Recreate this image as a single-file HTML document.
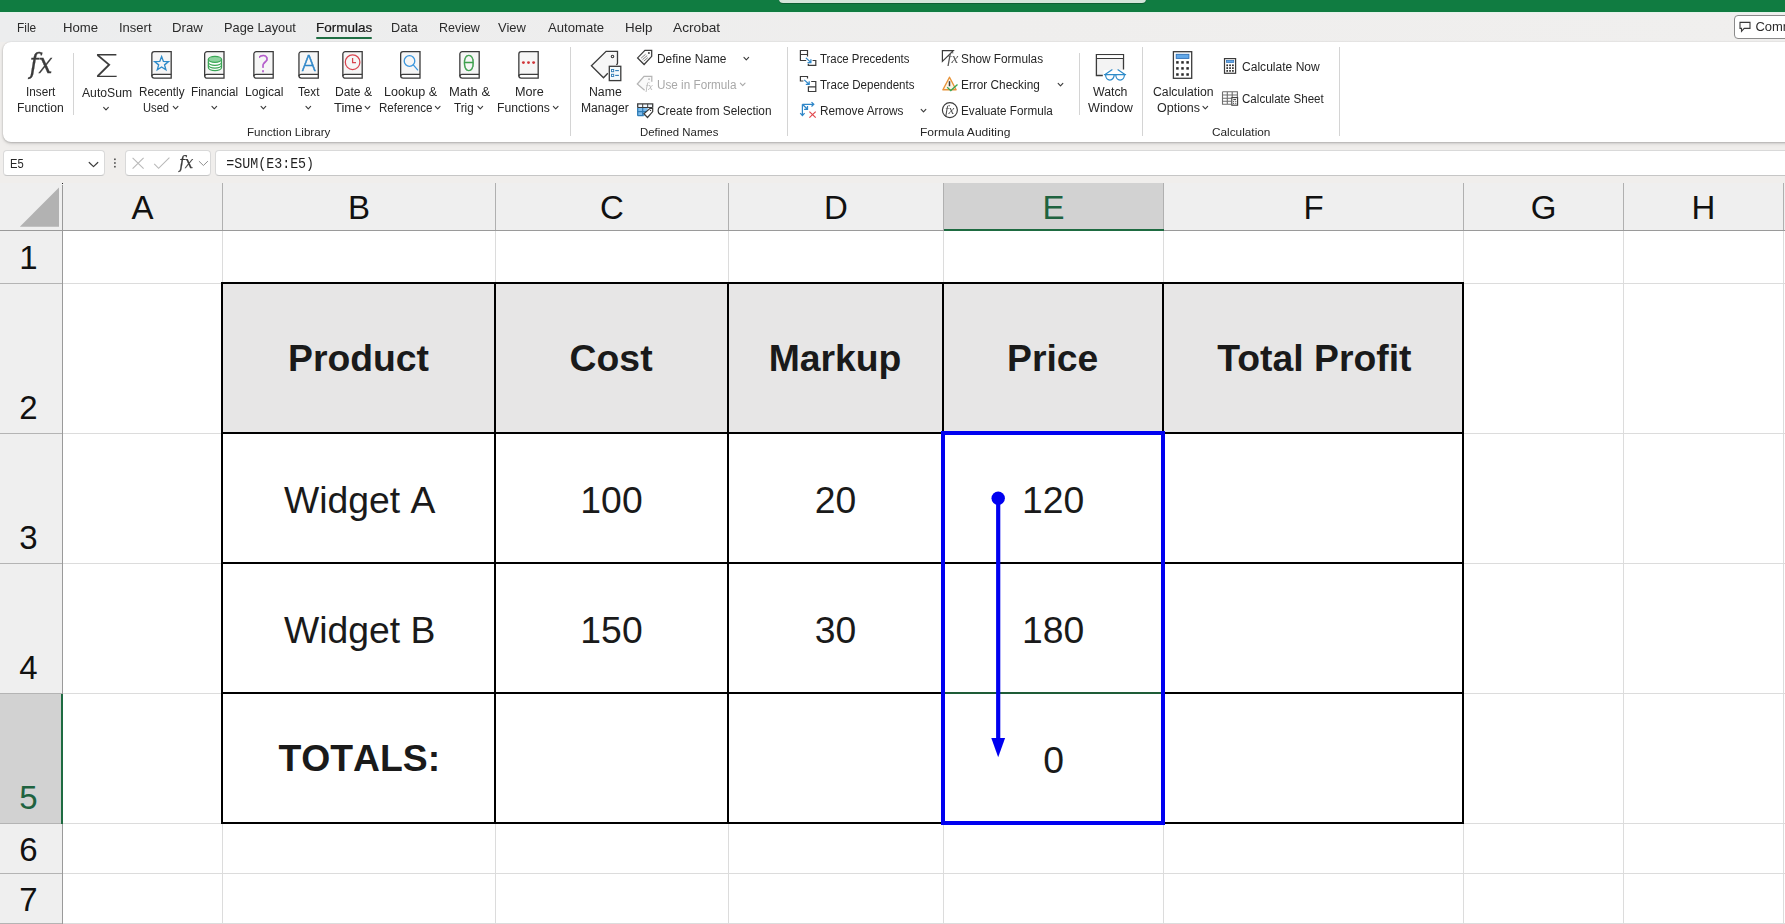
<!DOCTYPE html>
<html lang="en"><head><meta charset="utf-8"><title>Excel - Formulas</title>
<style>
html,body{margin:0;padding:0}
body{width:1785px;height:924px;overflow:hidden;position:relative;background:#f0eeec;font-family:"Liberation Sans",sans-serif}
.abs{position:absolute}
.t{position:absolute;white-space:nowrap;line-height:16px;transform-origin:0 0}
.hl{position:absolute;text-align:center;font-size:33px;line-height:48px;white-space:nowrap}
.ct{position:absolute;text-align:center;font-size:37.33px;color:#1a1a1a;white-space:nowrap;font-kerning:none}
.box{position:absolute;background:#fff;border:1px solid #d9d9d9;border-bottom-color:#c6c6c6;border-radius:4px;box-sizing:border-box}
</style></head><body>
<!-- title bar -->
<div class="abs" style="left:0;top:0;width:1785px;height:12px;background:#107c41"></div>
<div class="abs" style="left:779px;top:-6px;width:367px;height:9px;background:#d3e5da;border-radius:4px;box-shadow:0 1px 0 #0c5f32"></div>
<!-- tab row -->
<div class="abs" style="left:0;top:12px;width:1785px;height:30px;background:linear-gradient(90deg,#ecedee 0,#efeeed 55%,#f0efee 100%)"></div>
<div class="abs" style="left:316.3px;top:36.6px;width:56.2px;height:2.4px;background:#1f6e43;border-radius:1.2px"></div>
<div class="abs" style="left:0;top:12px;width:1785px;height:1px;background:#e4f2ea"></div>
<!-- comments button -->
<div class="abs" style="left:1733.7px;top:15px;width:70px;height:24px;background:#fff;border:1px solid #8a8a8a;border-radius:4px;box-sizing:border-box"></div>
<!-- ribbon -->
<div class="abs" style="left:3px;top:42px;width:1800px;height:100px;background:#fff;border-radius:8px;box-shadow:0 1px 2.5px rgba(0,0,0,.24),0 0 1.5px rgba(0,0,0,.10),0 3px 5px rgba(0,0,0,.04)"></div>
<!-- formula bar -->
<div class="box" style="left:3.4px;top:149.8px;width:101.2px;height:26.2px"></div>
<div class="box" style="left:124.7px;top:149.8px;width:85.9px;height:26.2px"></div>
<div class="box" style="left:214.7px;top:149.8px;width:1600px;height:26.2px"></div>
<div class="abs" style="left:0;top:0;width:1785px;height:180px;will-change:transform">
<span class="abs" style="left:226.3px;top:156.71px;font-family:'Liberation Mono',monospace;font-size:13.3px;line-height:16px;color:#1f1f1f;white-space:nowrap;transform-origin:0 50%;transform:scaleY(1.08)">=SUM(E3:E5)</span>
<span class="t" style="left:16.71px;top:19.50px;font-size:13px;color:#2b2b2b;font-weight:normal;transform:scaleX(0.9149);">File</span>
<span class="t" style="left:62.71px;top:19.50px;font-size:13px;color:#2b2b2b;font-weight:normal;transform:scaleX(1.0139);">Home</span>
<span class="t" style="left:118.72px;top:19.50px;font-size:13px;color:#2b2b2b;font-weight:normal;transform:scaleX(1.0017);">Insert</span>
<span class="t" style="left:171.72px;top:19.50px;font-size:13px;color:#2b2b2b;font-weight:normal;transform:scaleX(1.0173);">Draw</span>
<span class="t" style="left:223.72px;top:19.50px;font-size:13px;color:#2b2b2b;font-weight:normal;transform:scaleX(0.9843);">Page Layout</span>
<span class="t" style="left:391.12px;top:19.50px;font-size:13px;color:#2b2b2b;font-weight:normal;transform:scaleX(0.9746);">Data</span>
<span class="t" style="left:438.72px;top:19.50px;font-size:13px;color:#2b2b2b;font-weight:normal;transform:scaleX(0.9588);">Review</span>
<span class="t" style="left:498.42px;top:19.50px;font-size:13px;color:#2b2b2b;font-weight:normal;transform:scaleX(0.9970);">View</span>
<span class="t" style="left:547.71px;top:19.50px;font-size:13px;color:#2b2b2b;font-weight:normal;transform:scaleX(1.0092);">Automate</span>
<span class="t" style="left:625.41px;top:19.50px;font-size:13px;color:#2b2b2b;font-weight:normal;transform:scaleX(1.0269);">Help</span>
<span class="t" style="left:673.41px;top:19.50px;font-size:13px;color:#2b2b2b;font-weight:normal;transform:scaleX(1.0526);">Acrobat</span>
<span class="t" style="left:316.12px;top:19.50px;font-size:13px;color:#1a1a1a;font-weight:normal;transform:scaleX(1.0366);-webkit-text-stroke:0.22px #1a1a1a;">Formulas</span>
<span class="t" style="left:26.06px;top:83.84px;font-size:12px;color:#262626;font-weight:normal;transform:scaleX(0.9788);">Insert</span>
<span class="t" style="left:17.26px;top:99.84px;font-size:12px;color:#262626;font-weight:normal;transform:scaleX(1.0141);">Function</span>
<span class="t" style="left:81.76px;top:84.84px;font-size:12px;color:#262626;font-weight:normal;transform:scaleX(1.0146);">AutoSum</span>
<span class="t" style="left:138.76px;top:83.84px;font-size:12px;color:#262626;font-weight:normal;transform:scaleX(0.9741);">Recently</span>
<span class="t" style="left:142.76px;top:99.84px;font-size:12px;color:#262626;font-weight:normal;transform:scaleX(0.9309);">Used</span>
<span class="t" style="left:190.76px;top:83.84px;font-size:12px;color:#262626;font-weight:normal;transform:scaleX(0.9802);">Financial</span>
<span class="t" style="left:244.76px;top:83.84px;font-size:12px;color:#262626;font-weight:normal;transform:scaleX(1.0118);">Logical</span>
<span class="t" style="left:297.76px;top:83.84px;font-size:12px;color:#262626;font-weight:normal;transform:scaleX(0.9757);">Text</span>
<span class="t" style="left:334.76px;top:83.84px;font-size:12px;color:#262626;font-weight:normal;transform:scaleX(1.0107);">Date &amp;</span>
<span class="t" style="left:333.76px;top:99.84px;font-size:12px;color:#262626;font-weight:normal;transform:scaleX(1.0856);">Time</span>
<span class="t" style="left:383.76px;top:83.84px;font-size:12px;color:#262626;font-weight:normal;transform:scaleX(1.0466);">Lookup &amp;</span>
<span class="t" style="left:378.76px;top:99.84px;font-size:12px;color:#262626;font-weight:normal;transform:scaleX(0.9658);">Reference</span>
<span class="t" style="left:448.76px;top:83.84px;font-size:12px;color:#262626;font-weight:normal;transform:scaleX(1.0806);">Math &amp;</span>
<span class="t" style="left:454.16px;top:99.84px;font-size:12px;color:#262626;font-weight:normal;transform:scaleX(0.9726);">Trig</span>
<span class="t" style="left:514.76px;top:83.84px;font-size:12px;color:#262626;font-weight:normal;transform:scaleX(1.0525);">More</span>
<span class="t" style="left:496.76px;top:99.84px;font-size:12px;color:#262626;font-weight:normal;transform:scaleX(1.0144);">Functions</span>
<span class="t" style="left:588.76px;top:83.84px;font-size:12px;color:#262626;font-weight:normal;transform:scaleX(1.0239);">Name</span>
<span class="t" style="left:580.76px;top:99.84px;font-size:12px;color:#262626;font-weight:normal;transform:scaleX(1.0085);">Manager</span>
<span class="t" style="left:1092.76px;top:83.84px;font-size:12px;color:#262626;font-weight:normal;transform:scaleX(1.0273);">Watch</span>
<span class="t" style="left:1087.76px;top:99.84px;font-size:12px;color:#262626;font-weight:normal;transform:scaleX(1.0490);">Window</span>
<span class="t" style="left:1152.76px;top:83.84px;font-size:12px;color:#262626;font-weight:normal;transform:scaleX(1.0186);">Calculation</span>
<span class="t" style="left:1156.76px;top:99.84px;font-size:12px;color:#262626;font-weight:normal;transform:scaleX(1.0416);">Options</span>
<span class="t" style="left:656.76px;top:51.14px;font-size:12px;color:#262626;font-weight:normal;transform:scaleX(0.9921);">Define Name</span>
<span class="t" style="left:656.76px;top:77.14px;font-size:12px;color:#a8a8a8;font-weight:normal;transform:scaleX(0.9769);">Use in Formula</span>
<span class="t" style="left:656.76px;top:103.14px;font-size:12px;color:#262626;font-weight:normal;transform:scaleX(0.9864);">Create from Selection</span>
<span class="t" style="left:819.76px;top:51.14px;font-size:12px;color:#262626;font-weight:normal;transform:scaleX(0.9492);">Trace Precedents</span>
<span class="t" style="left:819.76px;top:77.14px;font-size:12px;color:#262626;font-weight:normal;transform:scaleX(0.9613);">Trace Dependents</span>
<span class="t" style="left:819.76px;top:103.14px;font-size:12px;color:#262626;font-weight:normal;transform:scaleX(0.9856);">Remove Arrows</span>
<span class="t" style="left:961.46px;top:51.14px;font-size:12px;color:#262626;font-weight:normal;transform:scaleX(0.9845);">Show Formulas</span>
<span class="t" style="left:961.46px;top:77.14px;font-size:12px;color:#262626;font-weight:normal;transform:scaleX(0.9844);">Error Checking</span>
<span class="t" style="left:961.46px;top:103.14px;font-size:12px;color:#262626;font-weight:normal;transform:scaleX(0.9759);">Evaluate Formula</span>
<span class="t" style="left:1241.76px;top:58.84px;font-size:12px;color:#262626;font-weight:normal;transform:scaleX(1.0052);">Calculate Now</span>
<span class="t" style="left:1241.76px;top:90.84px;font-size:12px;color:#262626;font-weight:normal;transform:scaleX(0.9651);">Calculate Sheet</span>
<span class="t" style="left:247.10px;top:123.89px;font-size:11px;color:#262626;font-weight:normal;transform:scaleX(1.0572);">Function Library</span>
<span class="t" style="left:639.80px;top:123.89px;font-size:11px;color:#262626;font-weight:normal;transform:scaleX(1.0338);">Defined Names</span>
<span class="t" style="left:919.80px;top:123.89px;font-size:11px;color:#262626;font-weight:normal;transform:scaleX(1.0950);">Formula Auditing</span>
<span class="t" style="left:1211.81px;top:123.89px;font-size:11px;color:#262626;font-weight:normal;transform:scaleX(1.0729);">Calculation</span>
<span class="t" style="left:10.06px;top:155.54px;font-size:12px;color:#262626;font-weight:normal;transform:scaleX(0.9314);">E5</span>
<span class="t" style="left:1755.41px;top:19.30px;font-size:13px;color:#2b2b2b;font-weight:normal;transform:scaleX(1.0000);">Comments</span>
<svg class="abs" style="left:0;top:0" width="1785" height="180" viewBox="0 0 1785 180">
<path d="M103.65,107.35 L106.00,109.85 L108.35,107.35" fill="none" stroke="#3b3b3b" stroke-width="1.1" stroke-linecap="round" stroke-linejoin="round"/><path d="M173.25,106.35 L175.60,108.85 L177.95,106.35" fill="none" stroke="#3b3b3b" stroke-width="1.1" stroke-linecap="round" stroke-linejoin="round"/><path d="M211.95,106.35 L214.30,108.85 L216.65,106.35" fill="none" stroke="#3b3b3b" stroke-width="1.1" stroke-linecap="round" stroke-linejoin="round"/><path d="M261.05,106.35 L263.40,108.85 L265.75,106.35" fill="none" stroke="#3b3b3b" stroke-width="1.1" stroke-linecap="round" stroke-linejoin="round"/><path d="M305.95,106.35 L308.30,108.85 L310.65,106.35" fill="none" stroke="#3b3b3b" stroke-width="1.1" stroke-linecap="round" stroke-linejoin="round"/><path d="M365.15,106.35 L367.50,108.85 L369.85,106.35" fill="none" stroke="#3b3b3b" stroke-width="1.1" stroke-linecap="round" stroke-linejoin="round"/><path d="M435.35,106.35 L437.70,108.85 L440.05,106.35" fill="none" stroke="#3b3b3b" stroke-width="1.1" stroke-linecap="round" stroke-linejoin="round"/><path d="M477.95,106.35 L480.30,108.85 L482.65,106.35" fill="none" stroke="#3b3b3b" stroke-width="1.1" stroke-linecap="round" stroke-linejoin="round"/><path d="M553.35,106.35 L555.70,108.85 L558.05,106.35" fill="none" stroke="#3b3b3b" stroke-width="1.1" stroke-linecap="round" stroke-linejoin="round"/><path d="M1202.95,106.35 L1205.30,108.85 L1207.65,106.35" fill="none" stroke="#3b3b3b" stroke-width="1.1" stroke-linecap="round" stroke-linejoin="round"/><path d="M743.95,57.45 L746.30,59.95 L748.65,57.45" fill="none" stroke="#3b3b3b" stroke-width="1.1" stroke-linecap="round" stroke-linejoin="round"/><path d="M740.35,83.15 L742.70,85.65 L745.05,83.15" fill="none" stroke="#a8a8a8" stroke-width="1.1" stroke-linecap="round" stroke-linejoin="round"/><path d="M921.15,109.35 L923.50,111.85 L925.85,109.35" fill="none" stroke="#3b3b3b" stroke-width="1.1" stroke-linecap="round" stroke-linejoin="round"/><path d="M1058.15,83.35 L1060.50,85.85 L1062.85,83.35" fill="none" stroke="#3b3b3b" stroke-width="1.1" stroke-linecap="round" stroke-linejoin="round"/>
<text x="29.4" y="73.0" font-family="DejaVu Serif,serif" font-style="italic" font-size="28.5" fill="#3b3b3b" stroke="#3b3b3b" stroke-width="0.3" textLength="23.2" lengthAdjust="spacingAndGlyphs">fx</text>
<text x="93.0" y="77.0" font-family="DejaVu Sans Light,DejaVu Sans,sans-serif" font-size="32.2" fill="#3b3b3b" stroke="#3b3b3b" stroke-width="0.15" textLength="26.2" lengthAdjust="spacingAndGlyphs">Σ</text>
<line x1="73.5" y1="53" x2="73.5" y2="115" stroke="#d4d4d4" stroke-width="1"/>
<line x1="1079.5" y1="53" x2="1079.5" y2="115" stroke="#d4d4d4" stroke-width="1"/>
<line x1="570.5" y1="47" x2="570.5" y2="136" stroke="#d4d4d4" stroke-width="1"/>
<line x1="787.5" y1="47" x2="787.5" y2="136" stroke="#d4d4d4" stroke-width="1"/>
<line x1="1142.5" y1="47" x2="1142.5" y2="136" stroke="#d4d4d4" stroke-width="1"/>
<line x1="1339.5" y1="47" x2="1339.5" y2="136" stroke="#d4d4d4" stroke-width="1"/>
<path d="M154.25,51.65 H171.20 V78.2 H154.25 A2.4,2.4 0 0 1 151.85,75.8 V54.05 A2.4,2.4 0 0 1 154.25,51.65 Z" fill="#f6f6f6"/><path d="M152.15,76.3 A2.2,2.2 0 0 1 154.15,74.3 H171.20 V78.2 H154.25 Z" fill="#fff"/><path d="M154.25,51.65 H171.20 V78.2 H154.25 A2.4,2.4 0 0 1 151.85,75.8 V54.05 A2.4,2.4 0 0 1 154.25,51.65 Z" fill="none" stroke="#3b3b3b" stroke-width="1.3"/><path d="M151.85,76.3 A2.1,2.1 0 0 1 154.05,74.3 H171.20" fill="none" stroke="#3b3b3b" stroke-width="1.3"/>
<path d="M207.05,51.65 H224.00 V78.2 H207.05 A2.4,2.4 0 0 1 204.65,75.8 V54.05 A2.4,2.4 0 0 1 207.05,51.65 Z" fill="#f6f6f6"/><path d="M204.95,76.3 A2.2,2.2 0 0 1 206.95,74.3 H224.00 V78.2 H207.05 Z" fill="#fff"/><path d="M207.05,51.65 H224.00 V78.2 H207.05 A2.4,2.4 0 0 1 204.65,75.8 V54.05 A2.4,2.4 0 0 1 207.05,51.65 Z" fill="none" stroke="#3b3b3b" stroke-width="1.3"/><path d="M204.65,76.3 A2.1,2.1 0 0 1 206.85,74.3 H224.00" fill="none" stroke="#3b3b3b" stroke-width="1.3"/>
<path d="M256.25,51.65 H273.20 V78.2 H256.25 A2.4,2.4 0 0 1 253.85,75.8 V54.05 A2.4,2.4 0 0 1 256.25,51.65 Z" fill="#f6f6f6"/><path d="M254.15,76.3 A2.2,2.2 0 0 1 256.15,74.3 H273.20 V78.2 H256.25 Z" fill="#fff"/><path d="M256.25,51.65 H273.20 V78.2 H256.25 A2.4,2.4 0 0 1 253.85,75.8 V54.05 A2.4,2.4 0 0 1 256.25,51.65 Z" fill="none" stroke="#3b3b3b" stroke-width="1.3"/><path d="M253.85,76.3 A2.1,2.1 0 0 1 256.05,74.3 H273.20" fill="none" stroke="#3b3b3b" stroke-width="1.3"/>
<path d="M301.35,51.65 H318.30 V78.2 H301.35 A2.4,2.4 0 0 1 298.95,75.8 V54.05 A2.4,2.4 0 0 1 301.35,51.65 Z" fill="#f6f6f6"/><path d="M299.25,76.3 A2.2,2.2 0 0 1 301.25,74.3 H318.30 V78.2 H301.35 Z" fill="#fff"/><path d="M301.35,51.65 H318.30 V78.2 H301.35 A2.4,2.4 0 0 1 298.95,75.8 V54.05 A2.4,2.4 0 0 1 301.35,51.65 Z" fill="none" stroke="#3b3b3b" stroke-width="1.3"/><path d="M298.95,76.3 A2.1,2.1 0 0 1 301.15,74.3 H318.30" fill="none" stroke="#3b3b3b" stroke-width="1.3"/>
<path d="M345.25,51.65 H362.20 V78.2 H345.25 A2.4,2.4 0 0 1 342.85,75.8 V54.05 A2.4,2.4 0 0 1 345.25,51.65 Z" fill="#f6f6f6"/><path d="M343.15,76.3 A2.2,2.2 0 0 1 345.15,74.3 H362.20 V78.2 H345.25 Z" fill="#fff"/><path d="M345.25,51.65 H362.20 V78.2 H345.25 A2.4,2.4 0 0 1 342.85,75.8 V54.05 A2.4,2.4 0 0 1 345.25,51.65 Z" fill="none" stroke="#3b3b3b" stroke-width="1.3"/><path d="M342.85,76.3 A2.1,2.1 0 0 1 345.05,74.3 H362.20" fill="none" stroke="#3b3b3b" stroke-width="1.3"/>
<path d="M403.05,51.65 H420.00 V78.2 H403.05 A2.4,2.4 0 0 1 400.65,75.8 V54.05 A2.4,2.4 0 0 1 403.05,51.65 Z" fill="#f6f6f6"/><path d="M400.95,76.3 A2.2,2.2 0 0 1 402.95,74.3 H420.00 V78.2 H403.05 Z" fill="#fff"/><path d="M403.05,51.65 H420.00 V78.2 H403.05 A2.4,2.4 0 0 1 400.65,75.8 V54.05 A2.4,2.4 0 0 1 403.05,51.65 Z" fill="none" stroke="#3b3b3b" stroke-width="1.3"/><path d="M400.65,76.3 A2.1,2.1 0 0 1 402.85,74.3 H420.00" fill="none" stroke="#3b3b3b" stroke-width="1.3"/>
<path d="M462.25,51.65 H479.20 V78.2 H462.25 A2.4,2.4 0 0 1 459.85,75.8 V54.05 A2.4,2.4 0 0 1 462.25,51.65 Z" fill="#f6f6f6"/><path d="M460.15,76.3 A2.2,2.2 0 0 1 462.15,74.3 H479.20 V78.2 H462.25 Z" fill="#fff"/><path d="M462.25,51.65 H479.20 V78.2 H462.25 A2.4,2.4 0 0 1 459.85,75.8 V54.05 A2.4,2.4 0 0 1 462.25,51.65 Z" fill="none" stroke="#3b3b3b" stroke-width="1.3"/><path d="M459.85,76.3 A2.1,2.1 0 0 1 462.05,74.3 H479.20" fill="none" stroke="#3b3b3b" stroke-width="1.3"/>
<path d="M521.25,51.65 H538.20 V78.2 H521.25 A2.4,2.4 0 0 1 518.85,75.8 V54.05 A2.4,2.4 0 0 1 521.25,51.65 Z" fill="#f6f6f6"/><path d="M519.15,76.3 A2.2,2.2 0 0 1 521.15,74.3 H538.20 V78.2 H521.25 Z" fill="#fff"/><path d="M521.25,51.65 H538.20 V78.2 H521.25 A2.4,2.4 0 0 1 518.85,75.8 V54.05 A2.4,2.4 0 0 1 521.25,51.65 Z" fill="none" stroke="#3b3b3b" stroke-width="1.3"/><path d="M518.85,76.3 A2.1,2.1 0 0 1 521.05,74.3 H538.20" fill="none" stroke="#3b3b3b" stroke-width="1.3"/>
<path d="M161.60,56.60 L163.42,61.39 L168.54,61.64 L164.55,64.86 L165.89,69.81 L161.60,67.00 L157.31,69.81 L158.65,64.86 L154.66,61.64 L159.78,61.39 Z" fill="none" stroke="#2e8bc9" stroke-width="1.35" />
<path d="M208.35,59.3 V67.6 A6.6,3 0 0 0 221.54999999999998,67.6 V59.3" fill="#fff" stroke="#3aa655" stroke-width="1.2" />
<path d="M208.35,62.3 A6.6,3 0 0 0 221.54999999999998,62.3 M208.35,65.1 A6.6,3 0 0 0 221.54999999999998,65.1" fill="none" stroke="#3aa655" stroke-width="1.2" />
<ellipse cx="214.95" cy="59.3" rx="6.6" ry="3" fill="#8fd4a0" stroke="#3aa655" stroke-width="1.2"/>
<text x="263.6" y="71.6" text-anchor="middle" font-family="DejaVu Sans Light,DejaVu Sans,sans-serif" font-size="23" fill="#b157c9" stroke="#b157c9" stroke-width="0.5">?</text>
<text x="308.7" y="70.9" text-anchor="middle" font-family="DejaVu Sans Light,DejaVu Sans,sans-serif" font-size="22" fill="#2e86c8" stroke="#2e86c8" stroke-width="0.5">A</text>
<circle cx="352.6" cy="62.2" r="7.3" fill="none" stroke="#d9434e" stroke-width="1.25"/>
<path d="M352.6,58 V62.6 H356" fill="none" stroke="#d9434e" stroke-width="1.25" />
<circle cx="409.5" cy="61" r="5.3" fill="none" stroke="#3a96dd" stroke-width="1.3"/>
<path d="M413.3,64.9 L417.6,69.9" fill="none" stroke="#3a96dd" stroke-width="1.3" stroke-linecap="round"/>
<text x="468.9" y="71" text-anchor="middle" font-family="DejaVu Sans Light,DejaVu Sans,sans-serif" font-size="21.5" fill="#3c9f4c" stroke="#3c9f4c" stroke-width="0.5">θ</text>
<circle cx="523.4" cy="62.6" r="1.45" fill="#d13438"/>
<circle cx="528.5" cy="62.6" r="1.45" fill="#d13438"/>
<circle cx="533.6" cy="62.6" r="1.45" fill="#d13438"/>
<path d="M616.2,64.7 Q617.5,64.5 617.5,63.2 V51.4 H606.1 L591.4,65.7 L603.5,77.8 L607.8,73.2" fill="#f7f7f7" stroke="#3b3b3b" stroke-width="1.3" />
<circle cx="612.5" cy="56.5" r="1.25" fill="#fff" stroke="#3b3b3b" stroke-width="1.1"/>
<rect x="609.3" y="66.3" width="11.5" height="14.3" fill="#f4fbfd" stroke="#3b3b3b" stroke-width="1.3"/>
<rect x="611.5" y="69.5" width="2.2" height="2.2" fill="#fff" stroke="#2e7bb5" stroke-width="0.9"/>
<line x1="615.2" y1="70.6" x2="618.9" y2="70.6" stroke="#2e7bb5" stroke-width="1.1"/>
<rect x="611.5" y="74.30000000000001" width="2.2" height="2.2" fill="#fff" stroke="#2e7bb5" stroke-width="0.9"/>
<line x1="615.2" y1="75.4" x2="618.9" y2="75.4" stroke="#2e7bb5" stroke-width="1.1"/>
<path d="M651.7,50.3 H644.9 L637.6,57.9 L644.1,64.5 L651.7,56.3 Z" fill="#fbfbfb" stroke="#3b3b3b" stroke-width="1.25" />
<circle cx="648.9" cy="53.0" r="0.95" fill="#3b3b3b"/>
<line x1="641.2" y1="58.1" x2="645.6" y2="54.3" stroke="#6a6a6a" stroke-width="0.85"/>
<line x1="642.5" y1="59.6" x2="647.2" y2="55.6" stroke="#6a6a6a" stroke-width="0.85"/>
<line x1="643.8" y1="61.1" x2="647.8" y2="57.7" stroke="#6a6a6a" stroke-width="0.85"/>
<path d="M651.8,81.7 V76.3 H644 L637.3,84 L644.6,90.2" fill="#fafafa" stroke="#b5b5b5" stroke-width="1.25" />
<rect x="648.3" y="78.4" width="1.5" height="1.5" fill="#b5b5b5"/>
<text x="645.6" y="90.0" font-family="Liberation Serif,serif" font-style="italic" font-size="10" fill="#b5b5b5">fx</text>
<rect x="637.7" y="107.5" width="10" height="8.2" fill="#7fbcec"/>
<rect x="637.7" y="103.9" width="15" height="3.6" fill="#f3f9fe"/>
<path d="M637.7,115.7 H643.7 M637.7,111.60000000000001 H646.7 M642.7,107.5 V115.7" fill="none" stroke="#2e7bb5" stroke-width="1.2" />
<path d="M637.7,107.5 V115.7" fill="none" stroke="#2e7bb5" stroke-width="1.3" />
<path d="M637.7,107.5 H652.7 M642.7,103.9 V107.5 M647.7,103.9 V107.5" fill="none" stroke="#3b3b3b" stroke-width="1.0" />
<path d="M637.7,107.5 V103.9 H652.7 V107.5" fill="none" stroke="#3b3b3b" stroke-width="1.3" />
<path d="M652.7,108.4 H650.1 L643.9,113.7 L647.5,117.5 L652.7,111.6 Z" fill="#fff" stroke="#3b3b3b" stroke-width="1.2" />
<circle cx="650.5" cy="110.4" r="0.7" fill="#3b3b3b"/>
<path d="M806.2,60.5 H800.4 V50.5 H807.5 V56.6 M800.4,54.5 H807.5" fill="none" stroke="#3b3b3b" stroke-width="1.2" />
<path d="M805.9,57.9 L810.8,62.4 M810.9,59.3 V62.5 H807.5" fill="none" stroke="#2e86c8" stroke-width="1.25" />
<path d="M812.6,60.5 H815.8 V65.4 H808.3 V63.8" fill="none" stroke="#3b3b3b" stroke-width="1.2" />
<path d="M803.4,81 H800.4 V76.5 H807.5 V78.6" fill="none" stroke="#3b3b3b" stroke-width="1.2" />
<path d="M804.2,79.9 L809.1,84.3 M809.2,81.2 V84.4 H805.8" fill="none" stroke="#2e86c8" stroke-width="1.25" />
<path d="M811.2,81.5 H815.8 V91.5 H808.4 V86.2 M808.4,86.9 H815.8" fill="none" stroke="#3b3b3b" stroke-width="1.2" />
<path d="M802.4,104.3 V115.3 M800.2,113.2 L802.4,115.6 L804.6,113.2 M802.4,104.3 H813.5 M811.5,102.1 L813.8,104.3 L811.5,106.5 M802.4,104.3 L807.4,109.2 M807.5,105.9 V109.3 H804.1" fill="none" stroke="#2e86c8" stroke-width="1.25" />
<path d="M809.4,111.6 L815.7,117.6 M815.7,111.6 L809.4,117.6" fill="none" stroke="#e0474c" stroke-width="1.2" />
<path d="M953.3,50.7 H942.4 V61.4 Z" fill="none" stroke="#3b3b3b" stroke-width="1.2" />
<text x="947.3" y="62.6" font-family="Liberation Serif,serif" font-style="italic" font-size="15.5" fill="#555">fx</text>
<path d="M949.5,77.2 L942.9,89.8 H956.1 Z" fill="#fdf3e4" stroke="#e8943a" stroke-width="1.4" stroke-linejoin="round"/>
<path d="M949.5,81.2 V86.2" fill="none" stroke="#3b3b3b" stroke-width="1.5" />
<path d="M947.2,87.2 L950.8,90.6 L957.5,84.4" fill="none" stroke="#3aa655" stroke-width="1.3" />
<circle cx="949.9" cy="110.1" r="7.5" fill="none" stroke="#3b3b3b" stroke-width="1.15"/>
<text x="944.9" y="113.8" font-family="Liberation Serif,serif" font-style="italic" font-size="13" fill="#4a4a4a">fx</text>
<path d="M1102.8,75.5 H1096.4 V54.6 H1123.5 V69.6" fill="#f3f3f3" stroke="#3b3b3b" stroke-width="1.3" />
<rect x="1097" y="55.2" width="25.9" height="2.9" fill="#fff"/>
<path d="M1096.4,58.5 H1123.5" fill="none" stroke="#3b3b3b" stroke-width="1.0" />
<rect x="1103.6" y="70.2" width="22" height="12" fill="#fff"/>
<path d="M1104.4,74.6 H1125.6 M1105.4,74.2 L1112,69.8 M1124.6,74.2 L1118,69.8" fill="none" stroke="#2e8bc9" stroke-width="1.25" stroke-linecap="round"/>
<path d="M1105.6,74.8 A4.3,5.2 0 0 0 1114.2,74.8 M1115.8,74.8 A4.3,5.2 0 0 0 1124.4,74.8" fill="none" stroke="#2e8bc9" stroke-width="1.25" />
<rect x="1173.4" y="51.7" width="18.3" height="26.6" fill="#fff" stroke="#3b3b3b" stroke-width="1.3"/>
<rect x="1176.2" y="54.3" width="12.7" height="4.1" fill="#62a8e8" stroke="#2e6fb5" stroke-width="0.9"/>
<rect x="1176.15" y="61.15" width="2.5" height="2.5" fill="#2b2b2b"/>
<rect x="1176.15" y="67.15" width="2.5" height="2.5" fill="#2b2b2b"/>
<rect x="1176.15" y="73.25" width="2.5" height="2.5" fill="#2b2b2b"/>
<rect x="1181.25" y="61.15" width="2.5" height="2.5" fill="#2b2b2b"/>
<rect x="1181.25" y="67.15" width="2.5" height="2.5" fill="#2b2b2b"/>
<rect x="1181.25" y="73.25" width="2.5" height="2.5" fill="#2b2b2b"/>
<rect x="1186.35" y="61.15" width="2.5" height="2.5" fill="#2b2b2b"/>
<rect x="1186.35" y="67.15" width="2.5" height="2.5" fill="#2b2b2b"/>
<rect x="1186.35" y="73.25" width="2.5" height="2.5" fill="#2b2b2b"/>
<rect x="1224.5" y="58.6" width="11.1" height="14.7" fill="#fff" stroke="#3b3b3b" stroke-width="1.2"/>
<rect x="1226.4" y="60.4" width="7.4" height="2.1" fill="#62a8e8" stroke="#2e6fb5" stroke-width="0.7"/>
<rect x="1226.3500000000001" y="64.45" width="1.7" height="1.7" fill="#2b2b2b"/>
<rect x="1226.3500000000001" y="67.25" width="1.7" height="1.7" fill="#2b2b2b"/>
<rect x="1226.3500000000001" y="70.05000000000001" width="1.7" height="1.7" fill="#2b2b2b"/>
<rect x="1229.2" y="64.45" width="1.7" height="1.7" fill="#2b2b2b"/>
<rect x="1229.2" y="67.25" width="1.7" height="1.7" fill="#2b2b2b"/>
<rect x="1229.2" y="70.05000000000001" width="1.7" height="1.7" fill="#2b2b2b"/>
<rect x="1232.0500000000002" y="64.45" width="1.7" height="1.7" fill="#2b2b2b"/>
<rect x="1232.0500000000002" y="67.25" width="1.7" height="1.7" fill="#2b2b2b"/>
<rect x="1232.0500000000002" y="70.05000000000001" width="1.7" height="1.7" fill="#2b2b2b"/>
<path d="M1222.5,91.8 H1237.4 V97 M1222.5,91.8 V104.2 H1231 M1222.5,95 H1237.4 M1222.5,98.2 H1231.2 M1222.5,101.3 H1231.2 M1227.3,91.8 V104.2 M1232.2,91.8 V97.2" fill="none" stroke="#6e6e6e" stroke-width="1.1" />
<rect x="1231.8" y="97.6" width="5.8" height="7.6" fill="#fff" stroke="#3b3b3b" stroke-width="1.1"/>
<path d="M1233.3,99.6 H1236.1" fill="none" stroke="#3b3b3b" stroke-width="1.0" />
<rect x="1233.1" y="101.1" width="1" height="1" fill="#3b3b3b"/>
<rect x="1233.1" y="102.9" width="1" height="1" fill="#3b3b3b"/>
<rect x="1235.3" y="101.1" width="1" height="1" fill="#3b3b3b"/>
<rect x="1235.3" y="102.9" width="1" height="1" fill="#3b3b3b"/>
<path d="M1740.0,22.4 H1750.0 V28.4 H1744.2 L1741.5,31.3 V28.4 H1740.0 Z" fill="none" stroke="#3b3b3b" stroke-width="1.1" />
<path d="M89.2,162.5 L93.5,166.6 L97.8,162.5" fill="none" stroke="#3b3b3b" stroke-width="1.2" stroke-linecap="round" stroke-linejoin="round"/>
<rect x="114.1" y="158.5" width="1.6" height="1.6" fill="#4a4a4a"/>
<rect x="114.1" y="162.2" width="1.6" height="1.6" fill="#4a4a4a"/>
<rect x="114.1" y="165.89999999999998" width="1.6" height="1.6" fill="#4a4a4a"/>
<path d="M132.6,157.8 L143.6,168.6 M143.6,157.8 L132.6,168.6" fill="none" stroke="#b9b9b9" stroke-width="1.1" />
<path d="M154.2,163.8 L158.6,168.3 L169.4,157.6" fill="none" stroke="#b9b9b9" stroke-width="1.1" />
<text x="179.3" y="167.9" font-family="DejaVu Serif,serif" font-style="italic" font-size="16.5" fill="#3b3b3b" stroke="#3b3b3b" stroke-width="0.25" textLength="14.0" lengthAdjust="spacingAndGlyphs">fx</text>
<path d="M199.2,161.4 L203.4,165.5 L207.6,161.4" fill="none" stroke="#8e8e8e" stroke-width="1.0" stroke-linecap="round" stroke-linejoin="round"/>
</svg>
</div>
<div class="abs" style="left:0;top:176px;width:1785px;height:748px;background:#efefef"></div>
<div class="abs" style="left:0;top:176px;width:1785px;height:7px;background:#f0eeec"></div>
<div class="abs" style="left:63px;top:231px;width:1722px;height:693px;background:#fff"></div>
<div class="abs" style="left:944px;top:183px;width:219px;height:46px;background:#d2d2d2"></div>
<div class="abs" style="left:0;top:694px;width:61px;height:129px;background:#d2d2d2"></div>
<div class="abs" style="left:222px;top:231px;width:1px;height:693px;background:#dcdcdc"></div>
<div class="abs" style="left:495px;top:231px;width:1px;height:693px;background:#dcdcdc"></div>
<div class="abs" style="left:728px;top:231px;width:1px;height:693px;background:#dcdcdc"></div>
<div class="abs" style="left:943px;top:231px;width:1px;height:693px;background:#dcdcdc"></div>
<div class="abs" style="left:1163px;top:231px;width:1px;height:693px;background:#dcdcdc"></div>
<div class="abs" style="left:1463px;top:231px;width:1px;height:693px;background:#dcdcdc"></div>
<div class="abs" style="left:1623px;top:231px;width:1px;height:693px;background:#dcdcdc"></div>
<div class="abs" style="left:1783px;top:231px;width:1px;height:693px;background:#dcdcdc"></div>
<div class="abs" style="left:63px;top:283px;width:1722px;height:1px;background:#dcdcdc"></div>
<div class="abs" style="left:63px;top:433px;width:1722px;height:1px;background:#dcdcdc"></div>
<div class="abs" style="left:63px;top:563px;width:1722px;height:1px;background:#dcdcdc"></div>
<div class="abs" style="left:63px;top:693px;width:1722px;height:1px;background:#dcdcdc"></div>
<div class="abs" style="left:63px;top:823px;width:1722px;height:1px;background:#dcdcdc"></div>
<div class="abs" style="left:63px;top:873px;width:1722px;height:1px;background:#dcdcdc"></div>
<div class="abs" style="left:63px;top:923px;width:1722px;height:1px;background:#dcdcdc"></div>
<div class="abs" style="left:222px;top:183px;width:1px;height:47px;background:#b0b0b0"></div>
<div class="abs" style="left:495px;top:183px;width:1px;height:47px;background:#b0b0b0"></div>
<div class="abs" style="left:728px;top:183px;width:1px;height:47px;background:#b0b0b0"></div>
<div class="abs" style="left:943px;top:183px;width:1px;height:47px;background:#b0b0b0"></div>
<div class="abs" style="left:1163px;top:183px;width:1px;height:47px;background:#b0b0b0"></div>
<div class="abs" style="left:1463px;top:183px;width:1px;height:47px;background:#b0b0b0"></div>
<div class="abs" style="left:1623px;top:183px;width:1px;height:47px;background:#b0b0b0"></div>
<div class="abs" style="left:1783px;top:183px;width:1px;height:47px;background:#b0b0b0"></div>
<div class="abs" style="left:0;top:283px;width:62px;height:1px;background:#b4b4b4"></div>
<div class="abs" style="left:0;top:433px;width:62px;height:1px;background:#b4b4b4"></div>
<div class="abs" style="left:0;top:563px;width:62px;height:1px;background:#b4b4b4"></div>
<div class="abs" style="left:0;top:693px;width:62px;height:1px;background:#b4b4b4"></div>
<div class="abs" style="left:0;top:823px;width:62px;height:1px;background:#b4b4b4"></div>
<div class="abs" style="left:0;top:873px;width:62px;height:1px;background:#b4b4b4"></div>
<div class="abs" style="left:0;top:923px;width:62px;height:1px;background:#b4b4b4"></div>
<div class="abs" style="left:0;top:230px;width:1785px;height:1px;background:#9a9a9a"></div>
<div class="abs" style="left:62px;top:185px;width:1px;height:739px;background:#9a9a9a"></div>
<div class="abs" style="left:62px;top:183px;width:1px;height:1px;background:#222"></div>
<div class="abs" style="left:944px;top:229px;width:220px;height:2px;background:#1e6b41"></div>
<div class="abs" style="left:61px;top:694px;width:2px;height:130px;background:#1e6b41"></div>
<svg class="abs" style="left:0;top:176px" width="62" height="54"><path d="M59,11.5 V50.7 H19.8 Z" fill="#b2b2b2"/></svg>
<span class="hl" style="left:112.5px;width:60px;top:184.17px;color:#111">A</span>
<span class="hl" style="left:329.0px;width:60px;top:184.17px;color:#111">B</span>
<span class="hl" style="left:582.0px;width:60px;top:184.17px;color:#111">C</span>
<span class="hl" style="left:806.0px;width:60px;top:184.17px;color:#111">D</span>
<span class="hl" style="left:1023.5px;width:60px;top:184.17px;color:#1f6340">E</span>
<span class="hl" style="left:1283.5px;width:60px;top:184.17px;color:#111">F</span>
<span class="hl" style="left:1513.5px;width:60px;top:184.17px;color:#111">G</span>
<span class="hl" style="left:1673.5px;width:60px;top:184.17px;color:#111">H</span>
<span class="hl" style="left:-1.5px;width:60px;top:233.97px;color:#111">1</span>
<span class="hl" style="left:-1.5px;width:60px;top:383.97px;color:#111">2</span>
<span class="hl" style="left:-1.5px;width:60px;top:513.97px;color:#111">3</span>
<span class="hl" style="left:-1.5px;width:60px;top:643.97px;color:#111">4</span>
<span class="hl" style="left:-1.5px;width:60px;top:773.97px;color:#1f6340">5</span>
<span class="hl" style="left:-1.5px;width:60px;top:825.97px;color:#111">6</span>
<span class="hl" style="left:-1.5px;width:60px;top:875.97px;color:#111">7</span>
<div class="abs" style="left:222px;top:283px;width:1241px;height:150px;background:#e7e6e6"></div>
<div class="abs" style="left:221px;top:282px;width:2px;height:542px;background:#000"></div>
<div class="abs" style="left:494px;top:282px;width:2px;height:542px;background:#000"></div>
<div class="abs" style="left:727px;top:282px;width:2px;height:542px;background:#000"></div>
<div class="abs" style="left:942px;top:282px;width:2px;height:542px;background:#000"></div>
<div class="abs" style="left:1162px;top:282px;width:2px;height:542px;background:#000"></div>
<div class="abs" style="left:1462px;top:282px;width:2px;height:542px;background:#000"></div>
<div class="abs" style="left:221px;top:282px;width:1243px;height:2px;background:#000"></div>
<div class="abs" style="left:221px;top:432px;width:1243px;height:2px;background:#000"></div>
<div class="abs" style="left:221px;top:562px;width:1243px;height:2px;background:#000"></div>
<div class="abs" style="left:221px;top:692px;width:1243px;height:2px;background:#000"></div>
<div class="abs" style="left:221px;top:822px;width:1243px;height:2px;background:#000"></div>
<div class="ct" style="left:222px;width:273px;top:283px;height:150px;line-height:150px;font-weight:bold;">Product</div>
<div class="ct" style="left:494.6px;width:233px;top:283px;height:150px;line-height:150px;font-weight:bold;">Cost</div>
<div class="ct" style="left:727.5px;width:215px;top:283px;height:150px;line-height:150px;font-weight:bold;">Markup</div>
<div class="ct" style="left:942.7px;width:220px;top:283px;height:150px;line-height:150px;font-weight:bold;">Price</div>
<div class="ct" style="left:1164.4px;width:300px;top:283px;height:150px;line-height:150px;font-weight:bold;font-kerning:normal">Total Profit</div>
<div class="ct" style="left:223.2px;width:273px;top:435px;height:130px;line-height:130px;font-weight:normal;">Widget A</div>
<div class="ct" style="left:495px;width:233px;top:435px;height:130px;line-height:130px;font-weight:normal;">100</div>
<div class="ct" style="left:728px;width:215px;top:435px;height:130px;line-height:130px;font-weight:normal;">20</div>
<div class="ct" style="left:943.2px;width:220px;top:435px;height:130px;line-height:130px;font-weight:normal;">120</div>
<div class="ct" style="left:223.3px;width:273px;top:565px;height:130px;line-height:130px;font-weight:normal;">Widget B</div>
<div class="ct" style="left:495px;width:233px;top:565px;height:130px;line-height:130px;font-weight:normal;">150</div>
<div class="ct" style="left:728px;width:215px;top:565px;height:130px;line-height:130px;font-weight:normal;">30</div>
<div class="ct" style="left:943.2px;width:220px;top:565px;height:130px;line-height:130px;font-weight:normal;">180</div>
<div class="ct" style="left:222.8px;width:273px;top:693px;height:130px;line-height:130px;font-weight:bold;">TOTALS:</div>
<div class="ct" style="left:943.6px;width:220px;top:695px;height:130px;line-height:130px;font-weight:normal;">0</div>
<div class="abs" style="left:945px;top:692px;width:216px;height:2px;background:#1e5c37"></div>
<div class="abs" style="left:941px;top:431px;width:216px;height:386px;border:4px solid #0000f0"></div>
<svg class="abs" style="left:980px;top:480px" width="40" height="290"><circle cx="18.2" cy="18.3" r="6.7" fill="#0000f0"/><rect x="16.1" y="18" width="4.2" height="242" fill="#0000f0"/><path d="M11.3,258 H25.1 L18.2,277.2 Z" fill="#0000f0"/></svg>
</body></html>
